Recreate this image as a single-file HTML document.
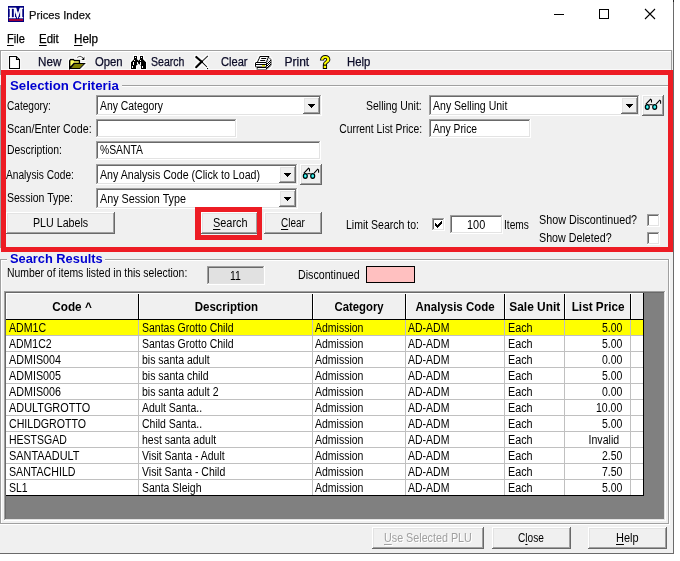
<!DOCTYPE html>
<html lang="en"><head><meta charset="utf-8"><title>Prices Index</title>
<style>
html,body{margin:0;padding:0;background:#fff;}
body{width:680px;height:561px;position:relative;overflow:hidden;font-family:"Liberation Sans",sans-serif;}
#w{position:absolute;left:0;top:0;width:680px;height:561px;will-change:transform;}
#w div,#w svg{position:absolute;}
.t{position:absolute;white-space:nowrap;display:block;}
.t u{text-decoration:underline;text-underline-offset:1.6px;text-decoration-thickness:1px;}
</style></head><body><div id="w">
<div style="left:0px;top:50px;width:673px;height:503px;background:#f0f0f0;"></div>
<div style="left:673px;top:0px;width:1px;height:554px;background:#6a6a6a;"></div>
<div style="left:673px;top:0px;width:1px;height:2px;background:#222;"></div>
<div style="left:0px;top:553px;width:674px;height:1px;background:#6a6a6a;"></div>
<div style="left:8px;top:6px;width:16px;height:16px;background:#000080;"></div>
<div style="left:9px;top:19px;width:14px;height:2px;background:#99003a;"></div>
<div style="left:554px;top:14px;width:10px;height:1px;background:#000;"></div>
<div style="left:599px;top:9px;width:8px;height:8px;border:1px solid #000;"></div>
<svg style="left:644px;top:8px" width="12" height="12" viewBox="0 0 12 12"><path d="M1 1 L11 11 M11 1 L1 11" stroke="#000" stroke-width="1.1" fill="none"/></svg>
<div style="left:0px;top:50px;width:672px;height:1px;background:#a0a0a0;"></div>
<div style="left:1px;top:51px;width:670px;height:1px;background:#fff;"></div>
<div style="left:0px;top:50px;width:1px;height:25px;background:#a0a0a0;"></div>
<div style="left:1px;top:51px;width:1px;height:19px;background:#fff;"></div>
<div style="left:0px;top:85px;width:1px;height:163px;background:#a0a0a0;"></div>
<div style="left:671px;top:50px;width:1px;height:20px;background:#a0a0a0;"></div>
<div style="left:2px;top:69px;width:669px;height:1px;background:#fafafa;"></div>
<svg style="left:0px;top:50px" width="400" height="22" viewBox="0 50 400 22"><defs><filter id="halo" x="0" y="50" width="400" height="22" filterUnits="userSpaceOnUse"><feMorphology in="SourceAlpha" operator="dilate" radius="1" result="d"/><feFlood flood-color="#fff" flood-opacity="0.9"/><feComposite in2="d" operator="in" result="h"/><feMerge><feMergeNode in="h"/><feMergeNode in="SourceGraphic"/></feMerge></filter></defs><g filter="url(#halo)"><path d="M9.5 56.5 H16.5 L19.5 59.5 V68.5 H9.5 Z" fill="#fff" stroke="#000" stroke-width="1.1"/><path d="M16.5 56.5 V59.5 H19.5" fill="none" stroke="#000" stroke-width="1.1"/><path d="M69.7 68.5 V60.5 L70.5 59.5 H73.5 L74.5 60.5 H79.5 V63.5 H74 L69.7 68.5 Z" fill="#ffff60" stroke="#000" stroke-width="1.4"/><path d="M74.5 63.5 H84.8 L80 68.5 H70.3 Z" fill="#808000" stroke="#000" stroke-width="1.1"/><path d="M77.3 57.6 Q80.3 54.6 83 58.2" fill="none" stroke="#000" stroke-width="1.1"/><path d="M84.6 56.6 V60 H81.2 Z" fill="#000"/><path d="M134 56 H137 V59 L138.5 60.5 L140 59 V56 H143 V59 L146 62 V69 H141 V66 L138.5 63.7 L136 66 V69 H131 V62 L134 59 Z" fill="#000"/><rect x="135" y="57" width="1" height="1" fill="#fff"/><rect x="141" y="57" width="1" height="1" fill="#fff"/><rect x="134" y="60" width="1" height="1" fill="#fff"/><rect x="140" y="60" width="1" height="1" fill="#fff"/><rect x="133" y="62" width="1" height="3" fill="#fff"/><rect x="137" y="62" width="1" height="2" fill="#fff"/><rect x="140" y="62" width="1" height="3" fill="#fff"/><rect x="132" y="66" width="1" height="2" fill="#fff"/><rect x="142" y="66" width="1" height="2" fill="#fff"/><path d="M196.2 57 L201.7 61.7" stroke="#000" stroke-width="2.4" stroke-linecap="round" fill="none"/><path d="M196.2 67.2 L201.7 61.7" stroke="#000" stroke-width="2.6" stroke-linecap="round" fill="none"/><path d="M201.7 61.7 L206.6 66.6 M201.7 61.7 L207.5 56.2" stroke="#000" stroke-width="1.3" stroke-linecap="round" fill="none"/><rect x="207" y="68" width="1.2" height="1.2" fill="#000"/><defs><pattern id="dz" width="2" height="2" patternUnits="userSpaceOnUse"><rect width="2" height="2" fill="#fff"/><rect width="1" height="1" fill="#000"/><rect x="1" y="1" width="1" height="1" fill="#000"/></pattern></defs><path d="M257.4 62 L259.9 56.5 H268.8 L266.5 62" fill="#fff" stroke="#000" stroke-width="1.1"/><path d="M261.2 58.5 H266.2 M260.2 60.5 H265.2" stroke="#000" stroke-width="1" fill="none"/><path d="M266.5 62 L271 59 V65.5 L267 69 Z" fill="url(#dz)"/><path d="M268.6 57.6 L271.2 59.4 V65.4 L267.4 68.8" fill="none" stroke="#000" stroke-width="1"/><rect x="255" y="62" width="12" height="5.6" rx="1" fill="#000"/><rect x="256" y="63" width="10" height="1" fill="#fff"/><rect x="256" y="65" width="10" height="1.5" fill="#fff"/><rect x="262" y="65" width="3" height="1.5" fill="#e6e600"/><rect x="256.5" y="67" width="10.5" height="2.8" rx="0.6" fill="#000"/><rect x="257.5" y="68" width="8.5" height="1" fill="#fff"/></g></svg>
<div style="left:122px;top:85px;width:546px;height:1px;background:#a0a0a0;"></div>
<div style="left:122px;top:86px;width:546px;height:1px;background:#fff;"></div>
<div style="left:96px;top:95px;width:226px;height:21px;background:#fff;"></div>
<div style="left:96px;top:95px;width:225px;height:20px;background:#a0a0a0;"></div>
<div style="left:97px;top:96px;width:224px;height:19px;background:#e3e3e3;"></div>
<div style="left:97px;top:96px;width:223px;height:18px;background:#696969;"></div>
<div style="left:98px;top:97px;width:222px;height:17px;background:#fff;"></div>
<div style="left:303px;top:97px;width:17px;height:17px;background:#696969;"></div>
<div style="left:303px;top:97px;width:16px;height:16px;background:#fff;"></div>
<div style="left:304px;top:98px;width:15px;height:15px;background:#a0a0a0;"></div>
<div style="left:304px;top:98px;width:14px;height:14px;background:#e3e3e3;"></div>
<div style="left:305px;top:99px;width:13px;height:13px;background:#f0f0f0;"></div>
<div style="left:308px;top:104px;width:7px;height:1px;background:#000;"></div>
<div style="left:309px;top:105px;width:5px;height:1px;background:#000;"></div>
<div style="left:310px;top:106px;width:3px;height:1px;background:#000;"></div>
<div style="left:311px;top:107px;width:1px;height:1px;background:#000;"></div>
<div style="left:96px;top:119px;width:141px;height:19px;background:#fff;"></div>
<div style="left:96px;top:119px;width:140px;height:18px;background:#a0a0a0;"></div>
<div style="left:97px;top:120px;width:139px;height:17px;background:#e3e3e3;"></div>
<div style="left:97px;top:120px;width:138px;height:16px;background:#696969;"></div>
<div style="left:98px;top:121px;width:137px;height:15px;background:#fff;"></div>
<div style="left:96px;top:141px;width:225px;height:19px;background:#fff;"></div>
<div style="left:96px;top:141px;width:224px;height:18px;background:#a0a0a0;"></div>
<div style="left:97px;top:142px;width:223px;height:17px;background:#e3e3e3;"></div>
<div style="left:97px;top:142px;width:222px;height:16px;background:#696969;"></div>
<div style="left:98px;top:143px;width:221px;height:15px;background:#fff;"></div>
<div style="left:96px;top:164px;width:202px;height:21px;background:#fff;"></div>
<div style="left:96px;top:164px;width:201px;height:20px;background:#a0a0a0;"></div>
<div style="left:97px;top:165px;width:200px;height:19px;background:#e3e3e3;"></div>
<div style="left:97px;top:165px;width:199px;height:18px;background:#696969;"></div>
<div style="left:98px;top:166px;width:198px;height:17px;background:#fff;"></div>
<div style="left:279px;top:166px;width:17px;height:17px;background:#696969;"></div>
<div style="left:279px;top:166px;width:16px;height:16px;background:#fff;"></div>
<div style="left:280px;top:167px;width:15px;height:15px;background:#a0a0a0;"></div>
<div style="left:280px;top:167px;width:14px;height:14px;background:#e3e3e3;"></div>
<div style="left:281px;top:168px;width:13px;height:13px;background:#f0f0f0;"></div>
<div style="left:284px;top:173px;width:7px;height:1px;background:#000;"></div>
<div style="left:285px;top:174px;width:5px;height:1px;background:#000;"></div>
<div style="left:286px;top:175px;width:3px;height:1px;background:#000;"></div>
<div style="left:287px;top:176px;width:1px;height:1px;background:#000;"></div>
<div style="left:300px;top:164px;width:22px;height:21px;background:#696969;"></div>
<div style="left:300px;top:164px;width:21px;height:20px;background:#fff;"></div>
<div style="left:301px;top:165px;width:20px;height:19px;background:#a0a0a0;"></div>
<div style="left:301px;top:165px;width:19px;height:18px;background:#e3e3e3;"></div>
<div style="left:302px;top:166px;width:18px;height:17px;background:#f0f0f0;"></div>
<svg style="left:300px;top:164px" width="22" height="21" viewBox="0 0 22 21"><ellipse cx="5.3" cy="12" rx="2" ry="2.4" fill="#00f0f0" stroke="#000" stroke-width="1.15"/><ellipse cx="12.7" cy="12" rx="2" ry="2.4" fill="#00f0f0" stroke="#000" stroke-width="1.15"/><rect x="5" y="11.2" width="1" height="1.6" fill="#a8e0e0"/><rect x="12.4" y="11.2" width="1" height="1.6" fill="#a8e0e0"/><path d="M7.3 9.7 H10.7" stroke="#000" stroke-width="1" fill="none"/><path d="M3.9 9.2 L8.5 4.3 L9.5 5 V7.4 M14.1 9.2 L17.7 5.2 L18.6 6 V8.7" stroke="#000" stroke-width="1.05" fill="none"/></svg>
<div style="left:96px;top:188px;width:202px;height:21px;background:#fff;"></div>
<div style="left:96px;top:188px;width:201px;height:20px;background:#a0a0a0;"></div>
<div style="left:97px;top:189px;width:200px;height:19px;background:#e3e3e3;"></div>
<div style="left:97px;top:189px;width:199px;height:18px;background:#696969;"></div>
<div style="left:98px;top:190px;width:198px;height:17px;background:#fff;"></div>
<div style="left:279px;top:190px;width:17px;height:17px;background:#696969;"></div>
<div style="left:279px;top:190px;width:16px;height:16px;background:#fff;"></div>
<div style="left:280px;top:191px;width:15px;height:15px;background:#a0a0a0;"></div>
<div style="left:280px;top:191px;width:14px;height:14px;background:#e3e3e3;"></div>
<div style="left:281px;top:192px;width:13px;height:13px;background:#f0f0f0;"></div>
<div style="left:284px;top:197px;width:7px;height:1px;background:#000;"></div>
<div style="left:285px;top:198px;width:5px;height:1px;background:#000;"></div>
<div style="left:286px;top:199px;width:3px;height:1px;background:#000;"></div>
<div style="left:287px;top:200px;width:1px;height:1px;background:#000;"></div>
<div style="left:6px;top:212px;width:109px;height:22px;background:#696969;"></div>
<div style="left:6px;top:212px;width:108px;height:21px;background:#fff;"></div>
<div style="left:7px;top:213px;width:107px;height:20px;background:#a0a0a0;"></div>
<div style="left:7px;top:213px;width:106px;height:19px;background:#e3e3e3;"></div>
<div style="left:8px;top:214px;width:105px;height:18px;background:#f0f0f0;"></div>
<div style="left:201px;top:212px;width:57px;height:22px;background:#696969;"></div>
<div style="left:201px;top:212px;width:56px;height:21px;background:#fff;"></div>
<div style="left:202px;top:213px;width:55px;height:20px;background:#a0a0a0;"></div>
<div style="left:202px;top:213px;width:54px;height:19px;background:#e3e3e3;"></div>
<div style="left:203px;top:214px;width:53px;height:18px;background:#f0f0f0;"></div>
<div style="left:264px;top:212px;width:58px;height:22px;background:#696969;"></div>
<div style="left:264px;top:212px;width:57px;height:21px;background:#fff;"></div>
<div style="left:265px;top:213px;width:56px;height:20px;background:#a0a0a0;"></div>
<div style="left:265px;top:213px;width:55px;height:19px;background:#e3e3e3;"></div>
<div style="left:266px;top:214px;width:54px;height:18px;background:#f0f0f0;"></div>
<div style="left:429px;top:95px;width:211px;height:21px;background:#fff;"></div>
<div style="left:429px;top:95px;width:210px;height:20px;background:#a0a0a0;"></div>
<div style="left:430px;top:96px;width:209px;height:19px;background:#e3e3e3;"></div>
<div style="left:430px;top:96px;width:208px;height:18px;background:#696969;"></div>
<div style="left:431px;top:97px;width:207px;height:17px;background:#fff;"></div>
<div style="left:621px;top:97px;width:17px;height:17px;background:#696969;"></div>
<div style="left:621px;top:97px;width:16px;height:16px;background:#fff;"></div>
<div style="left:622px;top:98px;width:15px;height:15px;background:#a0a0a0;"></div>
<div style="left:622px;top:98px;width:14px;height:14px;background:#e3e3e3;"></div>
<div style="left:623px;top:99px;width:13px;height:13px;background:#f0f0f0;"></div>
<div style="left:626px;top:104px;width:7px;height:1px;background:#000;"></div>
<div style="left:627px;top:105px;width:5px;height:1px;background:#000;"></div>
<div style="left:628px;top:106px;width:3px;height:1px;background:#000;"></div>
<div style="left:629px;top:107px;width:1px;height:1px;background:#000;"></div>
<div style="left:642px;top:95px;width:22px;height:21px;background:#696969;"></div>
<div style="left:642px;top:95px;width:21px;height:20px;background:#fff;"></div>
<div style="left:643px;top:96px;width:20px;height:19px;background:#a0a0a0;"></div>
<div style="left:643px;top:96px;width:19px;height:18px;background:#e3e3e3;"></div>
<div style="left:644px;top:97px;width:18px;height:17px;background:#f0f0f0;"></div>
<svg style="left:642px;top:95px" width="22" height="21" viewBox="0 0 22 21"><ellipse cx="5.3" cy="12" rx="2" ry="2.4" fill="#00f0f0" stroke="#000" stroke-width="1.15"/><ellipse cx="12.7" cy="12" rx="2" ry="2.4" fill="#00f0f0" stroke="#000" stroke-width="1.15"/><rect x="5" y="11.2" width="1" height="1.6" fill="#a8e0e0"/><rect x="12.4" y="11.2" width="1" height="1.6" fill="#a8e0e0"/><path d="M7.3 9.7 H10.7" stroke="#000" stroke-width="1" fill="none"/><path d="M3.9 9.2 L8.5 4.3 L9.5 5 V7.4 M14.1 9.2 L17.7 5.2 L18.6 6 V8.7" stroke="#000" stroke-width="1.05" fill="none"/></svg>
<div style="left:429px;top:119px;width:102px;height:19px;background:#fff;"></div>
<div style="left:429px;top:119px;width:101px;height:18px;background:#a0a0a0;"></div>
<div style="left:430px;top:120px;width:100px;height:17px;background:#e3e3e3;"></div>
<div style="left:430px;top:120px;width:99px;height:16px;background:#696969;"></div>
<div style="left:431px;top:121px;width:98px;height:15px;background:#fff;"></div>
<div style="left:432px;top:218px;width:13px;height:13px;background:#fff;"></div>
<div style="left:432px;top:218px;width:12px;height:12px;background:#a0a0a0;"></div>
<div style="left:433px;top:219px;width:11px;height:11px;background:#e3e3e3;"></div>
<div style="left:433px;top:219px;width:10px;height:10px;background:#696969;"></div>
<div style="left:434px;top:220px;width:9px;height:9px;background:#fff;"></div>
<div style="left:435px;top:223px;width:1px;height:3px;background:#000;"></div>
<div style="left:436px;top:224px;width:1px;height:3px;background:#000;"></div>
<div style="left:437px;top:225px;width:1px;height:3px;background:#000;"></div>
<div style="left:438px;top:224px;width:1px;height:3px;background:#000;"></div>
<div style="left:439px;top:223px;width:1px;height:3px;background:#000;"></div>
<div style="left:440px;top:222px;width:1px;height:3px;background:#000;"></div>
<div style="left:441px;top:221px;width:1px;height:3px;background:#000;"></div>
<div style="left:450px;top:215px;width:53px;height:19px;background:#fff;"></div>
<div style="left:450px;top:215px;width:52px;height:18px;background:#a0a0a0;"></div>
<div style="left:451px;top:216px;width:51px;height:17px;background:#e3e3e3;"></div>
<div style="left:451px;top:216px;width:50px;height:16px;background:#696969;"></div>
<div style="left:452px;top:217px;width:49px;height:15px;background:#fff;"></div>
<div style="left:647px;top:214px;width:13px;height:13px;background:#fff;"></div>
<div style="left:647px;top:214px;width:12px;height:12px;background:#a0a0a0;"></div>
<div style="left:648px;top:215px;width:11px;height:11px;background:#e3e3e3;"></div>
<div style="left:648px;top:215px;width:10px;height:10px;background:#696969;"></div>
<div style="left:649px;top:216px;width:9px;height:9px;background:#fff;"></div>
<div style="left:647px;top:232px;width:13px;height:13px;background:#fff;"></div>
<div style="left:647px;top:232px;width:12px;height:12px;background:#a0a0a0;"></div>
<div style="left:648px;top:233px;width:11px;height:11px;background:#e3e3e3;"></div>
<div style="left:648px;top:233px;width:10px;height:10px;background:#696969;"></div>
<div style="left:649px;top:234px;width:9px;height:9px;background:#fff;"></div>
<div style="left:0px;top:259px;width:7px;height:1px;background:#a0a0a0;"></div>
<div style="left:0px;top:260px;width:7px;height:1px;background:#fff;"></div>
<div style="left:105px;top:259px;width:564px;height:1px;background:#a0a0a0;"></div>
<div style="left:105px;top:260px;width:564px;height:1px;background:#fff;"></div>
<div style="left:0px;top:259px;width:1px;height:265px;background:#a0a0a0;"></div>
<div style="left:1px;top:260px;width:1px;height:263px;background:#fff;"></div>
<div style="left:668px;top:259px;width:1px;height:265px;background:#a0a0a0;"></div>
<div style="left:669px;top:259px;width:1px;height:266px;background:#fff;"></div>
<div style="left:0px;top:523px;width:669px;height:1px;background:#a0a0a0;"></div>
<div style="left:0px;top:524px;width:670px;height:1px;background:#fff;"></div>
<div style="left:207px;top:266px;width:58px;height:19px;background:#fff;"></div>
<div style="left:207px;top:266px;width:57px;height:18px;background:#a0a0a0;"></div>
<div style="left:208px;top:267px;width:56px;height:17px;background:#e3e3e3;"></div>
<div style="left:208px;top:267px;width:55px;height:16px;background:#696969;"></div>
<div style="left:209px;top:268px;width:54px;height:15px;background:#e1e1e1;"></div>
<div style="left:366px;top:266px;width:49px;height:17px;background:#000;"></div>
<div style="left:367px;top:267px;width:47px;height:15px;background:#ffc0c0;"></div>
<div style="left:4px;top:291px;width:662px;height:230px;background:#fff;"></div>
<div style="left:4px;top:291px;width:661px;height:229px;background:#a0a0a0;"></div>
<div style="left:5px;top:292px;width:660px;height:228px;background:#e3e3e3;"></div>
<div style="left:5px;top:292px;width:659px;height:227px;background:#696969;"></div>
<div style="left:6px;top:293px;width:658px;height:226px;background:#808080;"></div>
<div style="left:6px;top:293px;width:638px;height:26px;background:#f0f0f0;"></div>
<div style="left:6px;top:319px;width:638px;height:1px;background:#000;"></div>
<div style="left:138px;top:293px;width:1px;height:27px;background:#000;"></div>
<div style="left:312px;top:293px;width:1px;height:27px;background:#000;"></div>
<div style="left:405px;top:293px;width:1px;height:27px;background:#000;"></div>
<div style="left:504px;top:293px;width:1px;height:27px;background:#000;"></div>
<div style="left:564px;top:293px;width:1px;height:27px;background:#000;"></div>
<div style="left:630px;top:293px;width:1px;height:27px;background:#000;"></div>
<div style="left:643px;top:293px;width:1px;height:27px;background:#000;"></div>
<div style="left:6px;top:293px;width:1px;height:26px;background:#fff;"></div>
<div style="left:139px;top:293px;width:1px;height:26px;background:#fff;"></div>
<div style="left:313px;top:293px;width:1px;height:26px;background:#fff;"></div>
<div style="left:406px;top:293px;width:1px;height:26px;background:#fff;"></div>
<div style="left:505px;top:293px;width:1px;height:26px;background:#fff;"></div>
<div style="left:565px;top:293px;width:1px;height:26px;background:#fff;"></div>
<div style="left:631px;top:293px;width:1px;height:26px;background:#fff;"></div>
<div style="left:6px;top:293px;width:637px;height:1px;background:#fff;"></div>
<div style="left:6px;top:320px;width:637px;height:176px;background:#fff;"></div>
<div style="left:6px;top:320px;width:637px;height:15px;background:#ffff00;"></div>
<div style="left:138px;top:320px;width:1px;height:176px;background:#c0c0c0;"></div>
<div style="left:312px;top:320px;width:1px;height:176px;background:#c0c0c0;"></div>
<div style="left:405px;top:320px;width:1px;height:176px;background:#c0c0c0;"></div>
<div style="left:504px;top:320px;width:1px;height:176px;background:#c0c0c0;"></div>
<div style="left:564px;top:320px;width:1px;height:176px;background:#c0c0c0;"></div>
<div style="left:630px;top:320px;width:1px;height:176px;background:#c0c0c0;"></div>
<div style="left:6px;top:335px;width:637px;height:1px;background:#c0c0c0;"></div>
<div style="left:6px;top:351px;width:637px;height:1px;background:#c0c0c0;"></div>
<div style="left:6px;top:367px;width:637px;height:1px;background:#c0c0c0;"></div>
<div style="left:6px;top:383px;width:637px;height:1px;background:#c0c0c0;"></div>
<div style="left:6px;top:399px;width:637px;height:1px;background:#c0c0c0;"></div>
<div style="left:6px;top:415px;width:637px;height:1px;background:#c0c0c0;"></div>
<div style="left:6px;top:431px;width:637px;height:1px;background:#c0c0c0;"></div>
<div style="left:6px;top:447px;width:637px;height:1px;background:#c0c0c0;"></div>
<div style="left:6px;top:463px;width:637px;height:1px;background:#c0c0c0;"></div>
<div style="left:6px;top:479px;width:637px;height:1px;background:#c0c0c0;"></div>
<div style="left:6px;top:495px;width:637px;height:1px;background:#c0c0c0;"></div>
<div style="left:6px;top:495px;width:638px;height:1px;background:#000;"></div>
<div style="left:643px;top:293px;width:1px;height:203px;background:#000;"></div>
<div style="left:372px;top:527px;width:112px;height:22px;background:#696969;"></div>
<div style="left:372px;top:527px;width:111px;height:21px;background:#fff;"></div>
<div style="left:373px;top:528px;width:110px;height:20px;background:#a0a0a0;"></div>
<div style="left:373px;top:528px;width:109px;height:19px;background:#e3e3e3;"></div>
<div style="left:374px;top:529px;width:108px;height:18px;background:#f0f0f0;"></div>
<div style="left:492px;top:527px;width:79px;height:22px;background:#696969;"></div>
<div style="left:492px;top:527px;width:78px;height:21px;background:#fff;"></div>
<div style="left:493px;top:528px;width:77px;height:20px;background:#a0a0a0;"></div>
<div style="left:493px;top:528px;width:76px;height:19px;background:#e3e3e3;"></div>
<div style="left:494px;top:529px;width:75px;height:18px;background:#f0f0f0;"></div>
<div style="left:588px;top:527px;width:79px;height:22px;background:#696969;"></div>
<div style="left:588px;top:527px;width:78px;height:21px;background:#fff;"></div>
<div style="left:589px;top:528px;width:77px;height:20px;background:#a0a0a0;"></div>
<div style="left:589px;top:528px;width:76px;height:19px;background:#e3e3e3;"></div>
<div style="left:590px;top:529px;width:75px;height:18px;background:#f0f0f0;"></div>
<div style="left:1px;top:70px;width:672px;height:5px;background:#ed1c24;"></div>
<div style="left:1px;top:247px;width:672px;height:5px;background:#ed1c24;"></div>
<div style="left:1px;top:70px;width:5px;height:182px;background:#ed1c24;"></div>
<div style="left:668px;top:70px;width:5px;height:182px;background:#ed1c24;"></div>
<div style="left:195px;top:207px;width:67px;height:5px;background:#ed1c24;"></div>
<div style="left:195px;top:235px;width:67px;height:5px;background:#ed1c24;"></div>
<div style="left:195px;top:207px;width:6px;height:33px;background:#ed1c24;"></div>
<div style="left:257px;top:207px;width:5px;height:33px;background:#ed1c24;"></div>
<span class="t" style="top:3.20px;font-size:15px;line-height:21px;color:#fff;font-weight:bold;font-family:'Liberation Serif', serif;left:6.00px;transform:scaleX(0.7200);transform-origin:50% 0;-webkit-text-stroke:0.7px #fff;">IM</span>
<span class="t" style="top:6.78px;font-size:11.6px;line-height:16px;color:#101010;left:29.40px;transform:scaleX(0.9656);transform-origin:0 0;-webkit-text-stroke:0.25px currentColor;">Prices Index</span>
<span class="t" style="top:31.04px;font-size:12px;line-height:17px;color:#000;left:7.30px;transform:scaleX(0.9195);transform-origin:0 0;-webkit-text-stroke:0.25px currentColor;"><u>F</u>ile</span>
<span class="t" style="top:31.04px;font-size:12px;line-height:17px;color:#000;left:39.30px;transform:scaleX(0.9515);transform-origin:0 0;-webkit-text-stroke:0.25px currentColor;"><u>E</u>dit</span>
<span class="t" style="top:31.04px;font-size:12px;line-height:17px;color:#000;left:73.60px;transform:scaleX(0.9722);transform-origin:0 0;-webkit-text-stroke:0.25px currentColor;"><u>H</u>elp</span>
<span class="t" style="top:54.04px;font-size:12px;line-height:17px;color:#0c0c28;left:37.60px;transform:scaleX(0.9702);transform-origin:0 0;-webkit-text-stroke:0.25px currentColor;">New</span>
<span class="t" style="top:54.04px;font-size:12px;line-height:17px;color:#0c0c28;left:94.80px;transform:scaleX(0.9401);transform-origin:0 0;-webkit-text-stroke:0.25px currentColor;">Open</span>
<span class="t" style="top:54.04px;font-size:12px;line-height:17px;color:#0c0c28;left:150.60px;transform:scaleX(0.8782);transform-origin:0 0;-webkit-text-stroke:0.25px currentColor;">Search</span>
<span class="t" style="top:54.04px;font-size:12px;line-height:17px;color:#0c0c28;left:220.50px;transform:scaleX(0.9237);transform-origin:0 0;-webkit-text-stroke:0.25px currentColor;">Clear</span>
<span class="t" style="top:54.04px;font-size:12px;line-height:17px;color:#0c0c28;left:284.50px;-webkit-text-stroke:0.25px currentColor;">Print</span>
<span class="t" style="top:51.28px;font-size:16.5px;line-height:23px;color:#ffff00;font-weight:bold;left:320.15px;-webkit-text-stroke:1.9px #000;paint-order:stroke fill;">?</span>
<span class="t" style="top:54.04px;font-size:12px;line-height:17px;color:#0c0c28;left:346.70px;transform:scaleX(0.9438);transform-origin:0 0;-webkit-text-stroke:0.25px currentColor;">Help</span>
<span class="t" style="top:75.62px;font-size:13.5px;line-height:19px;color:#0000d0;font-weight:bold;left:10.00px;transform:scaleX(0.9798);transform-origin:0 0;">Selection Criteria</span>
<span class="t" style="top:96.67px;font-size:12.5px;line-height:18px;color:#000;left:6.50px;transform:scaleX(0.8081);transform-origin:0 0;">Category:</span>
<span class="t" style="top:119.67px;font-size:12.5px;line-height:18px;color:#000;left:6.50px;transform:scaleX(0.8584);transform-origin:0 0;">Scan/Enter Code:</span>
<span class="t" style="top:140.67px;font-size:12.5px;line-height:18px;color:#000;left:6.50px;transform:scaleX(0.8318);transform-origin:0 0;">Description:</span>
<span class="t" style="top:165.67px;font-size:12.5px;line-height:18px;color:#000;left:6.20px;transform:scaleX(0.8144);transform-origin:0 0;">Analysis Code:</span>
<span class="t" style="top:188.67px;font-size:12.5px;line-height:18px;color:#000;left:6.50px;transform:scaleX(0.8417);transform-origin:0 0;">Session Type:</span>
<span class="t" style="top:96.67px;font-size:12.5px;line-height:18px;color:#000;left:100.00px;transform:scaleX(0.8319);transform-origin:0 0;">Any Category</span>
<span class="t" style="top:140.67px;font-size:12.5px;line-height:18px;color:#000;left:100.00px;transform:scaleX(0.8289);transform-origin:0 0;">%SANTA</span>
<span class="t" style="top:165.67px;font-size:12.5px;line-height:18px;color:#000;left:99.50px;transform:scaleX(0.8498);transform-origin:0 0;">Any Analysis Code (Click to Load)</span>
<span class="t" style="top:189.67px;font-size:12.5px;line-height:18px;color:#000;left:99.50px;transform:scaleX(0.8613);transform-origin:0 0;">Any Session Type</span>
<span class="t" style="top:213.67px;font-size:12.5px;line-height:18px;color:#000;left:32.80px;transform:scaleX(0.8542);transform-origin:0 0;">PLU Labels</span>
<span class="t" style="top:213.67px;font-size:12.5px;line-height:18px;color:#000;left:212.80px;transform:scaleX(0.8732);transform-origin:0 0;"><u>S</u>earch</span>
<span class="t" style="top:213.67px;font-size:12.5px;line-height:18px;color:#000;left:281.00px;transform:scaleX(0.7967);transform-origin:0 0;"><u>C</u>lear</span>
<span class="t" style="top:96.67px;font-size:12.5px;line-height:18px;color:#000;left:355.10px;transform:scaleX(0.8335);transform-origin:100% 0;">Selling Unit:</span>
<span class="t" style="top:119.67px;font-size:12.5px;line-height:18px;color:#000;left:321.77px;transform:scaleX(0.8277);transform-origin:100% 0;">Current List Price:</span>
<span class="t" style="top:96.67px;font-size:12.5px;line-height:18px;color:#000;left:433.00px;transform:scaleX(0.8431);transform-origin:0 0;">Any Selling Unit</span>
<span class="t" style="top:119.67px;font-size:12.5px;line-height:18px;color:#000;left:433.00px;transform:scaleX(0.8224);transform-origin:0 0;">Any Price</span>
<span class="t" style="top:215.67px;font-size:12.5px;line-height:18px;color:#000;left:345.80px;transform:scaleX(0.8406);transform-origin:0 0;">Limit Search to:</span>
<span class="t" style="top:215.67px;font-size:12.5px;line-height:18px;color:#000;left:467.40px;transform:scaleX(0.8725);transform-origin:0 0;">100</span>
<span class="t" style="top:215.67px;font-size:12.5px;line-height:18px;color:#000;left:504.00px;transform:scaleX(0.8147);transform-origin:0 0;">Items</span>
<span class="t" style="top:211.07px;font-size:12.5px;line-height:18px;color:#000;left:539.30px;transform:scaleX(0.8608);transform-origin:0 0;">Show Discontinued?</span>
<span class="t" style="top:228.67px;font-size:12.5px;line-height:18px;color:#000;left:539.30px;transform:scaleX(0.8575);transform-origin:0 0;">Show Deleted?</span>
<span class="t" style="top:249.42px;font-size:13.5px;line-height:19px;color:#0000d0;font-weight:bold;left:10.30px;transform:scaleX(0.9503);transform-origin:0 0;">Search Results</span>
<span class="t" style="top:264.07px;font-size:12.5px;line-height:18px;color:#000;left:6.50px;transform:scaleX(0.8318);transform-origin:0 0;">Number of items listed in this selection:</span>
<span class="t" style="top:266.77px;font-size:12.5px;line-height:18px;color:#000;left:229.01px;transform:scaleX(0.8400);transform-origin:50% 0;">11</span>
<span class="t" style="top:265.97px;font-size:12.5px;line-height:18px;color:#000;left:297.70px;transform:scaleX(0.8538);transform-origin:0 0;">Discontinued</span>
<span class="t" style="top:297.87px;font-size:12.5px;line-height:18px;color:#000;font-weight:bold;left:51.48px;transform:scaleX(0.9398);transform-origin:50% 0;">Code ^</span>
<span class="t" style="top:297.87px;font-size:12.5px;line-height:18px;color:#000;font-weight:bold;left:191.62px;transform:scaleX(0.9205);transform-origin:50% 0;">Description</span>
<span class="t" style="top:297.87px;font-size:12.5px;line-height:18px;color:#000;font-weight:bold;left:332.41px;transform:scaleX(0.9043);transform-origin:50% 0;">Category</span>
<span class="t" style="top:297.87px;font-size:12.5px;line-height:18px;color:#000;font-weight:bold;left:412.43px;transform:scaleX(0.9171);transform-origin:50% 0;">Analysis Code</span>
<span class="t" style="top:297.87px;font-size:12.5px;line-height:18px;color:#000;font-weight:bold;left:508.25px;transform:scaleX(0.9533);transform-origin:50% 0;">Sale Unit</span>
<span class="t" style="top:297.87px;font-size:12.5px;line-height:18px;color:#000;font-weight:bold;left:569.86px;transform:scaleX(0.9399);transform-origin:50% 0;">List Price</span>
<span class="t" style="top:318.67px;font-size:12.5px;line-height:18px;color:#000;left:9.00px;transform:scaleX(0.8500);transform-origin:0 0;">ADM1C</span>
<span class="t" style="top:318.67px;font-size:12.5px;line-height:18px;color:#000;left:141.80px;transform:scaleX(0.8400);transform-origin:0 0;">Santas Grotto Child</span>
<span class="t" style="top:318.67px;font-size:12.5px;line-height:18px;color:#000;left:315.00px;transform:scaleX(0.8400);transform-origin:0 0;">Admission</span>
<span class="t" style="top:318.67px;font-size:12.5px;line-height:18px;color:#000;left:407.50px;transform:scaleX(0.8400);transform-origin:0 0;">AD-ADM</span>
<span class="t" style="top:318.67px;font-size:12.5px;line-height:18px;color:#000;left:508.00px;transform:scaleX(0.8632);transform-origin:0 0;">Each</span>
<span class="t" style="top:318.67px;font-size:12.5px;line-height:18px;color:#000;left:597.86px;transform:scaleX(0.8400);transform-origin:100% 0;">5.00</span>
<span class="t" style="top:334.67px;font-size:12.5px;line-height:18px;color:#000;left:9.00px;transform:scaleX(0.8400);transform-origin:0 0;">ADM1C2</span>
<span class="t" style="top:334.67px;font-size:12.5px;line-height:18px;color:#000;left:141.80px;transform:scaleX(0.8400);transform-origin:0 0;">Santas Grotto Child</span>
<span class="t" style="top:334.67px;font-size:12.5px;line-height:18px;color:#000;left:315.00px;transform:scaleX(0.8400);transform-origin:0 0;">Admission</span>
<span class="t" style="top:334.67px;font-size:12.5px;line-height:18px;color:#000;left:407.50px;transform:scaleX(0.8400);transform-origin:0 0;">AD-ADM</span>
<span class="t" style="top:334.67px;font-size:12.5px;line-height:18px;color:#000;left:508.00px;transform:scaleX(0.8632);transform-origin:0 0;">Each</span>
<span class="t" style="top:334.67px;font-size:12.5px;line-height:18px;color:#000;left:597.86px;transform:scaleX(0.8400);transform-origin:100% 0;">5.00</span>
<span class="t" style="top:350.67px;font-size:12.5px;line-height:18px;color:#000;left:9.00px;transform:scaleX(0.8602);transform-origin:0 0;">ADMIS004</span>
<span class="t" style="top:350.67px;font-size:12.5px;line-height:18px;color:#000;left:141.80px;transform:scaleX(0.8400);transform-origin:0 0;">bis santa adult</span>
<span class="t" style="top:350.67px;font-size:12.5px;line-height:18px;color:#000;left:315.00px;transform:scaleX(0.8400);transform-origin:0 0;">Admission</span>
<span class="t" style="top:350.67px;font-size:12.5px;line-height:18px;color:#000;left:407.50px;transform:scaleX(0.8400);transform-origin:0 0;">AD-ADM</span>
<span class="t" style="top:350.67px;font-size:12.5px;line-height:18px;color:#000;left:508.00px;transform:scaleX(0.8632);transform-origin:0 0;">Each</span>
<span class="t" style="top:350.67px;font-size:12.5px;line-height:18px;color:#000;left:597.86px;transform:scaleX(0.8400);transform-origin:100% 0;">0.00</span>
<span class="t" style="top:366.67px;font-size:12.5px;line-height:18px;color:#000;left:9.00px;transform:scaleX(0.8602);transform-origin:0 0;">ADMIS005</span>
<span class="t" style="top:366.67px;font-size:12.5px;line-height:18px;color:#000;left:141.80px;transform:scaleX(0.8400);transform-origin:0 0;">bis santa child</span>
<span class="t" style="top:366.67px;font-size:12.5px;line-height:18px;color:#000;left:315.00px;transform:scaleX(0.8400);transform-origin:0 0;">Admission</span>
<span class="t" style="top:366.67px;font-size:12.5px;line-height:18px;color:#000;left:407.50px;transform:scaleX(0.8400);transform-origin:0 0;">AD-ADM</span>
<span class="t" style="top:366.67px;font-size:12.5px;line-height:18px;color:#000;left:508.00px;transform:scaleX(0.8632);transform-origin:0 0;">Each</span>
<span class="t" style="top:366.67px;font-size:12.5px;line-height:18px;color:#000;left:597.86px;transform:scaleX(0.8400);transform-origin:100% 0;">5.00</span>
<span class="t" style="top:382.67px;font-size:12.5px;line-height:18px;color:#000;left:9.00px;transform:scaleX(0.8602);transform-origin:0 0;">ADMIS006</span>
<span class="t" style="top:382.67px;font-size:12.5px;line-height:18px;color:#000;left:141.80px;transform:scaleX(0.8400);transform-origin:0 0;">bis santa adult 2</span>
<span class="t" style="top:382.67px;font-size:12.5px;line-height:18px;color:#000;left:315.00px;transform:scaleX(0.8400);transform-origin:0 0;">Admission</span>
<span class="t" style="top:382.67px;font-size:12.5px;line-height:18px;color:#000;left:407.50px;transform:scaleX(0.8400);transform-origin:0 0;">AD-ADM</span>
<span class="t" style="top:382.67px;font-size:12.5px;line-height:18px;color:#000;left:508.00px;transform:scaleX(0.8632);transform-origin:0 0;">Each</span>
<span class="t" style="top:382.67px;font-size:12.5px;line-height:18px;color:#000;left:597.86px;transform:scaleX(0.8400);transform-origin:100% 0;">0.00</span>
<span class="t" style="top:398.67px;font-size:12.5px;line-height:18px;color:#000;left:9.00px;transform:scaleX(0.8714);transform-origin:0 0;">ADULTGROTTO</span>
<span class="t" style="top:398.67px;font-size:12.5px;line-height:18px;color:#000;left:141.80px;transform:scaleX(0.8400);transform-origin:0 0;">Adult Santa..</span>
<span class="t" style="top:398.67px;font-size:12.5px;line-height:18px;color:#000;left:315.00px;transform:scaleX(0.8400);transform-origin:0 0;">Admission</span>
<span class="t" style="top:398.67px;font-size:12.5px;line-height:18px;color:#000;left:407.50px;transform:scaleX(0.8400);transform-origin:0 0;">AD-ADM</span>
<span class="t" style="top:398.67px;font-size:12.5px;line-height:18px;color:#000;left:508.00px;transform:scaleX(0.8632);transform-origin:0 0;">Each</span>
<span class="t" style="top:398.67px;font-size:12.5px;line-height:18px;color:#000;left:590.92px;transform:scaleX(0.8400);transform-origin:100% 0;">10.00</span>
<span class="t" style="top:414.67px;font-size:12.5px;line-height:18px;color:#000;left:9.00px;transform:scaleX(0.8485);transform-origin:0 0;">CHILDGROTTO</span>
<span class="t" style="top:414.67px;font-size:12.5px;line-height:18px;color:#000;left:141.80px;transform:scaleX(0.8400);transform-origin:0 0;">Child Santa..</span>
<span class="t" style="top:414.67px;font-size:12.5px;line-height:18px;color:#000;left:315.00px;transform:scaleX(0.8400);transform-origin:0 0;">Admission</span>
<span class="t" style="top:414.67px;font-size:12.5px;line-height:18px;color:#000;left:407.50px;transform:scaleX(0.8400);transform-origin:0 0;">AD-ADM</span>
<span class="t" style="top:414.67px;font-size:12.5px;line-height:18px;color:#000;left:508.00px;transform:scaleX(0.8632);transform-origin:0 0;">Each</span>
<span class="t" style="top:414.67px;font-size:12.5px;line-height:18px;color:#000;left:597.86px;transform:scaleX(0.8400);transform-origin:100% 0;">5.00</span>
<span class="t" style="top:430.67px;font-size:12.5px;line-height:18px;color:#000;left:9.00px;transform:scaleX(0.8400);transform-origin:0 0;">HESTSGAD</span>
<span class="t" style="top:430.67px;font-size:12.5px;line-height:18px;color:#000;left:141.80px;transform:scaleX(0.8400);transform-origin:0 0;">hest santa adult</span>
<span class="t" style="top:430.67px;font-size:12.5px;line-height:18px;color:#000;left:315.00px;transform:scaleX(0.8400);transform-origin:0 0;">Admission</span>
<span class="t" style="top:430.67px;font-size:12.5px;line-height:18px;color:#000;left:407.50px;transform:scaleX(0.8400);transform-origin:0 0;">AD-ADM</span>
<span class="t" style="top:430.67px;font-size:12.5px;line-height:18px;color:#000;left:508.00px;transform:scaleX(0.8632);transform-origin:0 0;">Each</span>
<span class="t" style="top:430.67px;font-size:12.5px;line-height:18px;color:#000;left:583.06px;transform:scaleX(0.8467);transform-origin:100% 0;">Invalid</span>
<span class="t" style="top:446.67px;font-size:12.5px;line-height:18px;color:#000;left:9.00px;transform:scaleX(0.8724);transform-origin:0 0;">SANTAADULT</span>
<span class="t" style="top:446.67px;font-size:12.5px;line-height:18px;color:#000;left:141.80px;transform:scaleX(0.8400);transform-origin:0 0;">Visit Santa - Adult</span>
<span class="t" style="top:446.67px;font-size:12.5px;line-height:18px;color:#000;left:315.00px;transform:scaleX(0.8400);transform-origin:0 0;">Admission</span>
<span class="t" style="top:446.67px;font-size:12.5px;line-height:18px;color:#000;left:407.50px;transform:scaleX(0.8400);transform-origin:0 0;">AD-ADM</span>
<span class="t" style="top:446.67px;font-size:12.5px;line-height:18px;color:#000;left:508.00px;transform:scaleX(0.8632);transform-origin:0 0;">Each</span>
<span class="t" style="top:446.67px;font-size:12.5px;line-height:18px;color:#000;left:597.86px;transform:scaleX(0.8400);transform-origin:100% 0;">2.50</span>
<span class="t" style="top:462.67px;font-size:12.5px;line-height:18px;color:#000;left:9.00px;transform:scaleX(0.8497);transform-origin:0 0;">SANTACHILD</span>
<span class="t" style="top:462.67px;font-size:12.5px;line-height:18px;color:#000;left:141.80px;transform:scaleX(0.8400);transform-origin:0 0;">Visit Santa - Child</span>
<span class="t" style="top:462.67px;font-size:12.5px;line-height:18px;color:#000;left:315.00px;transform:scaleX(0.8400);transform-origin:0 0;">Admission</span>
<span class="t" style="top:462.67px;font-size:12.5px;line-height:18px;color:#000;left:407.50px;transform:scaleX(0.8400);transform-origin:0 0;">AD-ADM</span>
<span class="t" style="top:462.67px;font-size:12.5px;line-height:18px;color:#000;left:508.00px;transform:scaleX(0.8632);transform-origin:0 0;">Each</span>
<span class="t" style="top:462.67px;font-size:12.5px;line-height:18px;color:#000;left:597.86px;transform:scaleX(0.8400);transform-origin:100% 0;">7.50</span>
<span class="t" style="top:478.67px;font-size:12.5px;line-height:18px;color:#000;left:9.00px;transform:scaleX(0.8400);transform-origin:0 0;">SL1</span>
<span class="t" style="top:478.67px;font-size:12.5px;line-height:18px;color:#000;left:141.80px;transform:scaleX(0.8400);transform-origin:0 0;">Santa Sleigh</span>
<span class="t" style="top:478.67px;font-size:12.5px;line-height:18px;color:#000;left:315.00px;transform:scaleX(0.8400);transform-origin:0 0;">Admission</span>
<span class="t" style="top:478.67px;font-size:12.5px;line-height:18px;color:#000;left:407.50px;transform:scaleX(0.8400);transform-origin:0 0;">AD-ADM</span>
<span class="t" style="top:478.67px;font-size:12.5px;line-height:18px;color:#000;left:508.00px;transform:scaleX(0.8632);transform-origin:0 0;">Each</span>
<span class="t" style="top:478.67px;font-size:12.5px;line-height:18px;color:#000;left:597.86px;transform:scaleX(0.8400);transform-origin:100% 0;">5.00</span>
<span class="t" style="top:529.67px;font-size:12.5px;line-height:18px;color:#fff;left:385.20px;transform:scaleX(0.8596);transform-origin:0 0;"><u>U</u>se Selected PLU</span>
<span class="t" style="top:528.67px;font-size:12.5px;line-height:18px;color:#a0a0a0;left:384.20px;transform:scaleX(0.8596);transform-origin:0 0;"><u>U</u>se Selected PLU</span>
<span class="t" style="top:528.67px;font-size:12.5px;line-height:18px;color:#000;left:518.20px;transform:scaleX(0.8102);transform-origin:0 0;">C<u>l</u>ose</span>
<span class="t" style="top:528.67px;font-size:12.5px;line-height:18px;color:#000;left:616.20px;transform:scaleX(0.8787);transform-origin:0 0;"><u>H</u>elp</span>
</div></body></html>
